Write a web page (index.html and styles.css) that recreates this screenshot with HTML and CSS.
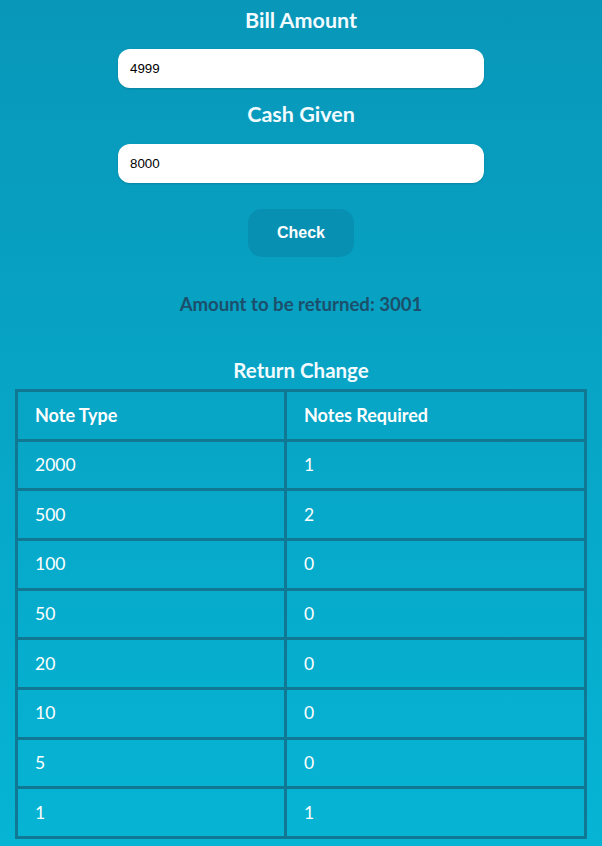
FILE: index.html
```html
<!DOCTYPE html>
<html lang="en">
<head>
<meta charset="utf-8">
<title>Cash Register</title>
<link rel="stylesheet" href="styles.css">
</head>
<body>
<main class="app">
  <h2 class="label">Bill Amount</h2>
  <input class="field" type="text" value="4999">
  <h2 class="label label-cash">Cash Given</h2>
  <input class="field field-cash" type="text" value="8000">
  <button class="btn" type="button">Check</button>
  <p class="result">Amount to be returned: 3001</p>
  <h2 class="label caption">Return Change</h2>
  <table class="change">
    <thead>
      <tr><th class="col-type">Note Type</th><th>Notes Required</th></tr>
    </thead>
    <tbody>
      <tr><td>2000</td><td>1</td></tr>
      <tr><td>500</td><td>2</td></tr>
      <tr><td>100</td><td>0</td></tr>
      <tr><td>50</td><td>0</td></tr>
      <tr><td>20</td><td>0</td></tr>
      <tr><td>10</td><td>0</td></tr>
      <tr><td>5</td><td>0</td></tr>
      <tr><td>1</td><td>1</td></tr>
    </tbody>
  </table>
</main>
</body>
</html>
```
FILE: styles.css
```css
html, body {
  margin: 0;
  padding: 0;
}
body {
  min-height: 846px;
  background: linear-gradient(to bottom, #0897b9 0%, #06b4d4 100%);
  font-family: Lato, "Noto Sans", sans-serif;
  color: #ffffff;
}
.app {
  display: flex;
  flex-direction: column;
  align-items: center;
  padding-top: 8px;
}
.label {
  margin: 0;
  font-size: 21.5px;
  line-height: 24px;
  font-weight: 700;
  color: #f2fbff;
}
.field {
  box-sizing: border-box;
  width: 366px;
  height: 39px;
  margin-top: 17px;
  padding: 0 12px;
  border: none;
  border-radius: 12px;
  background: #ffffff;
  box-shadow: 0 1px 2px rgba(0, 0, 0, 0.15);
  font-family: "Liberation Sans", Arial, sans-serif;
  font-size: 13.333px;
  color: #000000;
}
.label-cash {
  margin-top: 14px;
}
.field-cash {
  margin-top: 18px;
}
.btn {
  width: 106px;
  height: 48px;
  margin-top: 26px;
  border: none;
  border-radius: 14px;
  background: #0890b2;
  color: #ffffff;
  font-family: "Liberation Sans", Arial, sans-serif;
  font-weight: 700;
  font-size: 16px;
}
.result {
  margin: 35px 0 0;
  font-size: 18.6px;
  line-height: 24px;
  font-weight: 700;
  color: #1b4f6b;
}
.caption {
  margin-top: 42px;
  font-size: 20.5px;
}
.change {
  margin-top: 7px;
  width: 572px;
  border-collapse: collapse;
  border: 3px solid #117894;
}
.change th,
.change td {
  border: 3px solid #117894;
  height: 46.67px;
  padding: 0 17px;
  text-align: left;
  vertical-align: middle;
  font-size: 17.5px;
  line-height: 20px;
}
.change th {
  font-weight: 700;
  font-size: 18px;
}
.change td {
  font-weight: 400;
}
.col-type {
  width: 232px;
}
```
